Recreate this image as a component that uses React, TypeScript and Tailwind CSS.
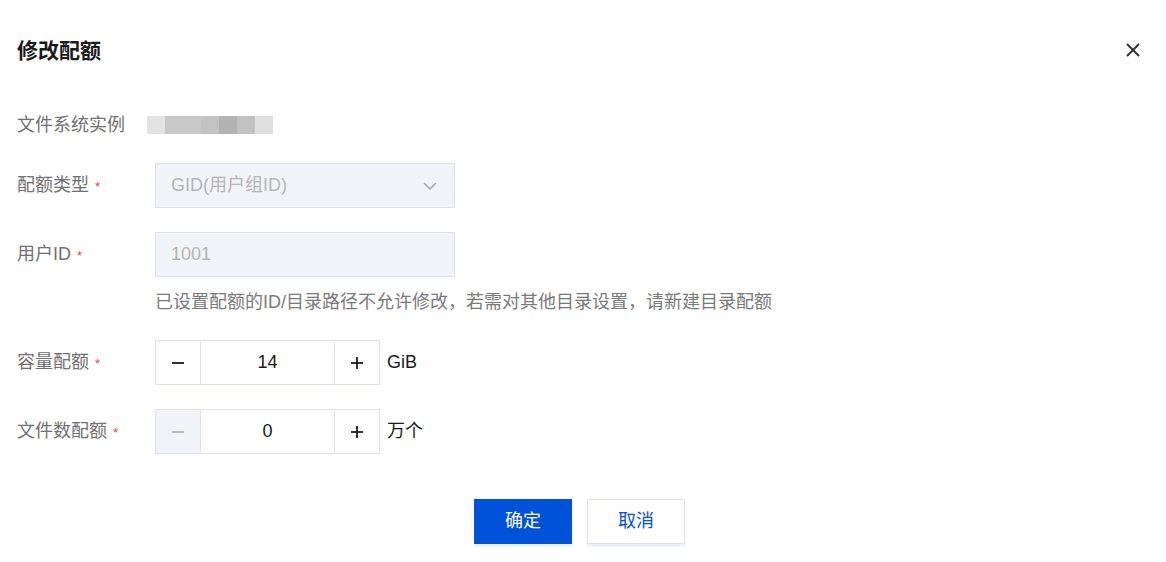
const font = { fontFamily: '"Liberation Sans", "Noto Sans CJK SC", sans-serif' };

const Required = () => <span className="ml-[6px] text-[13px] text-[#e54545] relative top-[1px]">*</span>;

const Label = ({ text, required }: { text: string; required?: boolean }) => (
  <div className="w-[138px] shrink-0 flex items-center text-[18px] text-[#707070]">
    {text}
    {required && <Required />}
  </div>
);

const Minus = ({ color }: { color: string }) => (
  <svg width="14" height="14" viewBox="0 0 14 14">
    <line x1="1" y1="7" x2="13" y2="7" stroke={color} strokeWidth="1.8" />
  </svg>
);

const Plus = () => (
  <svg width="14" height="14" viewBox="0 0 14 14">
    <line x1="1" y1="7" x2="13" y2="7" stroke="#1a1a1a" strokeWidth="1.8" />
    <line x1="7" y1="1" x2="7" y2="13" stroke="#1a1a1a" strokeWidth="1.8" />
  </svg>
);

const Stepper = ({ value, unit, minDisabled }: { value: string; unit: string; minDisabled?: boolean }) => (
  <div className="flex items-center">
    <div className="flex h-[45px] border border-[#dfe2ea]">
      <div className={`w-[45px] flex items-center justify-center border-r border-[#dfe2ea] ${minDisabled ? 'bg-[#f2f3f8]' : 'bg-white'}`}>
        <Minus color={minDisabled ? '#b5b5b5' : '#1a1a1a'} />
      </div>
      <div className="w-[133px] flex items-center justify-center text-[18px] text-[#1a1a1a]">{value}</div>
      <div className="w-[45px] flex items-center justify-center border-l border-[#dfe2ea]">
        <Plus />
      </div>
    </div>
    <span className="ml-[7px] text-[18px] text-[#1a1a1a]">{unit}</span>
  </div>
);

const blur = ['#e3e3e3', '#c8c8c8', '#c8c8c8', '#c3c3c3', '#b3b3b3', '#c2c2c2', '#e0e0e0'];

export default function App() {
  return (
    <div className="w-[1166px] h-[562px] bg-white overflow-hidden" style={font}>
      <div className="pl-[17px] pr-[26px] pt-[30px] h-[70px] flex items-center justify-between">
        <h1 className="text-[21px] font-bold text-[#1a1a1a] leading-none">修改配额</h1>
        <svg width="14" height="14" viewBox="0 0 14 14">
          <line x1="1" y1="1" x2="13" y2="13" stroke="#333" strokeWidth="2" />
          <line x1="13" y1="1" x2="1" y2="13" stroke="#333" strokeWidth="2" />
        </svg>
      </div>

      <div className="pl-[17px]">
        <div className="mt-[45px] h-[20px] flex items-center">
          <Label text="文件系统实例" />
          <div className="flex h-[18px] ml-[-8px]">
            {blur.map((c, i) => (
              <div key={i} className="w-[18px] h-full" style={{ backgroundColor: c }} />
            ))}
          </div>
        </div>

        <div className="mt-[28px] flex">
          <Label text="配额类型" required />
          <div className="w-[300px] h-[45px] border border-[#dfe2ea] bg-[#f2f3f8] flex items-center justify-between pl-[15px] pr-[17px] text-[18px] text-[#b5b5b5]">
            GID(用户组ID)
            <svg width="14" height="8" viewBox="0 0 14 8">
              <polyline points="1,1 7,7 13,1" fill="none" stroke="#a8a8a8" strokeWidth="1.6" />
            </svg>
          </div>
        </div>

        <div className="mt-[24px] flex">
          <Label text="用户ID" required />
          <div className="w-[300px] h-[45px] border border-[#dfe2ea] bg-[#f2f3f8] flex items-center pl-[15px] text-[18px] text-[#b5b5b5]">
            1001
          </div>
        </div>

        <div className="mt-[14px] h-[22px] pl-[138px] flex items-center text-[18px] text-[#7a7a7a]">
          已设置配额的ID/目录路径不允许修改，若需对其他目录设置，请新建目录配额
        </div>

        <div className="mt-[27px] flex">
          <Label text="容量配额" required />
          <Stepper value="14" unit="GiB" />
        </div>

        <div className="mt-[24px] flex">
          <Label text="文件数配额" required />
          <Stepper value="0" unit="万个" minDisabled />
        </div>
      </div>

      <div className="mt-[45px] flex justify-center gap-[15px] pr-[7px]">
        <button className="w-[98px] h-[45px] bg-[#0052d9] text-white text-[18px] shadow-[0_3px_0_#eef2f8]">确定</button>
        <button className="w-[98px] h-[45px] bg-white border border-[#dfe2ea] text-[#0052d9] text-[18px] shadow-[0_3px_0_#eef2f8]">取消</button>
      </div>
    </div>
  );
}
